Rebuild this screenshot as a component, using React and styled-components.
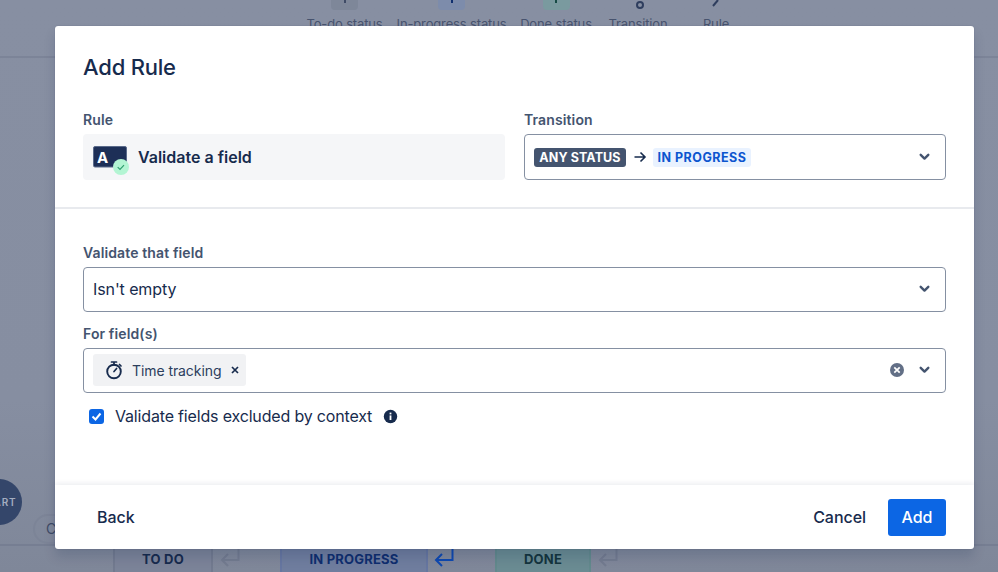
import React from "react";
import styled, { createGlobalStyle } from "styled-components";

const Global = createGlobalStyle`
  html, body { margin: 0; padding: 0; height: 100%; }
  body { font-family: Inter, "Noto Sans", sans-serif; color: #172b4d; overflow: hidden; -webkit-font-smoothing: antialiased; }
  * { box-sizing: border-box; }
`;

const Page = styled.div`
  position: relative;
  width: 998px;
  height: 572px;
  overflow: hidden;
  background: linear-gradient(#878fa2 0%, #868ea1 70%, #7f8799 100%);
  display: flex;
  flex-direction: column;
  justify-content: space-between;
`;

const TopBar = styled.div`
  height: 58px;
  border-bottom: 2px solid #7c8498;
  display: flex;
  justify-content: center;
  padding-left: 37px;
  gap: 14px;
`;

const Tool = styled.div`
  width: ${p => p.$w}px;
  height: 30px;
  margin-top: -2px;
  margin-left: ${p => p.$ml || 0}px;
  display: flex;
  flex-direction: column;
  align-items: center;
  font-size: 13px;
  line-height: 16px;
  letter-spacing: -.15px;
  color: #47536e;
  white-space: nowrap;
`;

const ToolTile = styled.div`
  width: 27px;
  height: 12px;
  border-radius: 0 0 4px 4px;
  background: ${p => p.$bg};
  margin-bottom: 6px;
  flex: none;
  display: flex;
  justify-content: center;
  &::after { content: ""; width: 2px; height: 5px; background: ${p => p.$fg}; }
`;

const ToolGlyph = styled.svg`
  width: 14px;
  height: 12px;
  margin-bottom: 6px;
  flex: none;
`;

const BottomRow = styled.div`
  height: 28px;
  border-top: 2px solid #767e92;
  padding-left: 113px;
  display: flex;
`;

const Status = styled.div`
  width: ${p => p.$w}px;
  margin-left: ${p => p.$ml || 0}px;
  background: ${p => p.$bg};
  border-left: 2px solid ${p => p.$bd};
  border-right: 2px solid ${p => p.$bd};
  color: ${p => p.$fg};
  font-size: 13px;
  font-weight: 700;
  line-height: 26px;
  text-align: center;
  letter-spacing: .2px;
`;

const ReturnIcon = styled.svg`
  width: 20px;
  height: 22px;
  margin-left: ${p => p.$ml}px;
  flex: none;
`;

const StartCircle = styled.div`
  position: absolute;
  left: -24px;
  top: 479px;
  width: 46px;
  height: 46px;
  border-radius: 50%;
  background: #34466a;
  color: #a3adc0;
  font-size: 10px;
  font-weight: 600;
  letter-spacing: .8px;
  line-height: 46px;
  text-align: center;
  padding-left: 12px;
`;

const GhostPill = styled.div`
  position: absolute;
  left: 33px;
  top: 514px;
  width: 60px;
  height: 30px;
  border: 2px solid #7c8497;
  border-radius: 15px;
  padding-left: 11px;
  font-size: 14px;
  line-height: 26px;
  color: #3f4b66;
`;

const Modal = styled.div`
  position: absolute;
  left: 55px;
  top: 26px;
  width: 919px;
  height: 523px;
  background: #fff;
  border-radius: 3px;
  box-shadow: 0 8px 12px rgba(9, 30, 66, .15), 0 0 1px rgba(9, 30, 66, .31);
  display: flex;
  flex-direction: column;
`;

const Title = styled.h1`
  margin: 0;
  padding: 27px 28px 0;
  height: 84px;
  font-size: 22px;
  line-height: 29px;
  font-weight: 500;
  letter-spacing: -.2px;
  color: #172b4d;
`;

const TopGrid = styled.div`
  display: grid;
  grid-template-columns: 422px 422px;
  column-gap: 19px;
  padding: 0 28px;
  height: 99px;
  border-bottom: 2px solid #e8eaee;
`;

const Field = styled.div`
  display: flex;
  flex-direction: column;
`;

const Label = styled.label`
  font-size: 14px;
  line-height: 20px;
  font-weight: 600;
  letter-spacing: .12px;
  color: #44546f;
  height: 24px;
`;

const RuleBox = styled.div`
  height: 46px;
  background: #f5f6f8;
  border-radius: 4px;
  display: flex;
  align-items: center;
  padding-left: 10px;
  gap: 10px;
  font-size: 16px;
  font-weight: 600;
  color: #172b4d;
`;

const Select = styled.div`
  height: ${p => p.$h || 46}px;
  border: 1px solid #8590a2;
  border-radius: 4px;
  background: #fff;
  display: flex;
  align-items: center;
  padding: 0 15px ${p => (p.$h ? 1 : 0)}px 9px;
  font-size: 16px;
  letter-spacing: -.1px;
  color: #172b4d;
`;

const Spacer = styled.div`
  flex: 1;
`;

const Lozenge = styled.span`
  height: 19px;
  width: ${p => p.$w}px;
  flex: none;
  text-align: center;
  border-radius: 3px;
  background: ${p => p.$bg};
  color: ${p => p.$fg};
  font-size: 12.5px;
  font-weight: 700;
  line-height: 19px;
  letter-spacing: ${p => p.$ls}px;
  white-space: nowrap;
`;

const Arrow = styled.svg`
  width: 14px;
  height: 14px;
  margin: 0 6px 0 7px;
  flex: none;
`;

const Chevron = styled.svg`
  width: 11px;
  height: 8px;
  flex: none;
`;

const Middle = styled.div`
  padding: 34px 28px 0;
  flex: 1;
`;

const GapField = styled(Field)`
  margin-top: ${p => p.$mt}px;
`;

const Tag = styled.div`
  height: 32px;
  display: flex;
  align-items: center;
  background: #f1f2f4;
  border-radius: 3px;
  padding: 0 6px 0 11px;
  font-size: 14px;
  letter-spacing: -.08px;
  color: #2c3e5d;
`;

const TagIcon = styled.svg`
  width: 20px;
  height: 20px;
  flex: none;
`;

const TagName = styled.span`
  margin: 0 9px 0 8px;
`;

const ClearIcon = styled.svg`
  width: 16px;
  height: 16px;
  margin-right: 14px;
  flex: none;
`;

const CheckRow = styled.div`
  display: flex;
  align-items: center;
  padding-left: 6px;
  margin-top: 14px;
  height: 18px;
  font-size: 16px;
  letter-spacing: -.17px;
  color: #172b4d;
`;

const Box = styled.span`
  width: 15px;
  height: 15px;
  border-radius: 3px;
  background: #0c66e4;
  display: flex;
  align-items: center;
  justify-content: center;
  margin-right: 11px;
`;

const InfoIcon = styled.svg`
  width: 15px;
  height: 15px;
  margin-left: 11px;
`;

const Footer = styled.div`
  height: 64px;
  flex: none;
  display: flex;
  align-items: center;
  padding: 0 28px 0 42px;
  box-shadow: 0 -2px 5px rgba(9, 30, 66, .07);
  border-radius: 0 0 3px 3px;
  font-size: 16px;
  font-weight: 500;
  letter-spacing: -.05px;
  color: #172b4d;
`;

const TextButton = styled.span`
  margin-right: 22px;
`;

const PrimaryButton = styled.div`
  width: 58px;
  height: 37px;
  border-radius: 3px;
  background: #0c66e4;
  color: #fff;
  text-align: center;
  line-height: 37px;
`;

const RuleGlyph = styled.svg`
  width: 36px;
  height: 30px;
  flex: none;
  margin: 8px -1px 0 0;
`;

const ChevronDown = () => (
  <Chevron viewBox="0 0 11 8"><path d="M1.7 1.8l3.8 3.8 3.8-3.8" fill="none" stroke="#44546f" strokeWidth="2.4" strokeLinecap="round" strokeLinejoin="round" /></Chevron>
);

const RuleIcon = () => (
  <RuleGlyph viewBox="0 0 36 30">
    <rect x="0.5" y="0.5" width="33" height="20.5" rx="1.5" fill="#1d2f57" stroke="#5a6a8a" />
    <text x="4" y="17" fontFamily="Inter, sans-serif" fontWeight="700" fontSize="15" fill="#fff">A</text>
    <circle cx="28" cy="21" r="8" fill="#b3f5d3" />
    <path d="M24.7 21.1l2.3 2.3 4-4.2" fill="none" stroke="#2e9e6e" strokeWidth="1.2" />
  </RuleGlyph>
);

const Ret = ({ color, ml }) => (
  <ReturnIcon $ml={ml} viewBox="0 0 20 22"><path d="M18.5 0v14H2M8 8l-6 6 6 6" fill="none" stroke={color} strokeWidth="2" /></ReturnIcon>
);

export default function App() {
  return (
    <Page>
      <Global />
      <TopBar>
        <Tool $w={76}><ToolTile $bg="#7e8799" $fg="#3f4b66" />To-do status</Tool>
        <Tool $w={110}><ToolTile $bg="#7d8cab" $fg="#0f2e6e" />In-progress status</Tool>
        <Tool $w={71}><ToolTile $bg="#7a9a9f" $fg="#164b45" />Done status</Tool>
        <Tool $w={59} $ml={3}>
          <ToolGlyph viewBox="0 0 14 12"><circle cx="9" cy="7" r="3" fill="none" stroke="#2f3e5e" strokeWidth="2" /></ToolGlyph>
          Transition
        </Tool>
        <Tool $w={25} $ml={22}>
          <ToolGlyph viewBox="0 0 14 12"><path d="M9 2L4 8" fill="none" stroke="#2f3e5e" strokeWidth="2" /></ToolGlyph>
          Rule
        </Tool>
      </TopBar>
      <BottomRow>
        <Status $w={100} $bg="#7b8398" $bd="#727a8f" $fg="#172b4d">TO DO</Status>
        <Ret color="#737b8f" ml={7} />
        <Status $w={148} $ml={40} $bg="#6f7d9e" $bd="#6676a0" $fg="#0f2e6e">IN PROGRESS</Status>
        <Ret color="#0f49b0" ml={6} />
        <Status $w={96} $ml={41} $bg="#6a8b92" $bd="#62898c" $fg="#14353d">DONE</Status>
        <Ret color="#737b8f" ml={7} />
      </BottomRow>
      <StartCircle>ART</StartCircle>
      <GhostPill>C</GhostPill>
      <Modal>
        <Title>Add Rule</Title>
        <TopGrid>
          <Field>
            <Label>Rule</Label>
            <RuleBox><RuleIcon />Validate a field</RuleBox>
          </Field>
          <Field>
            <Label>Transition</Label>
            <Select>
              <Lozenge $w={92} $ls={0.1} $bg="#44546f" $fg="#fff">ANY STATUS</Lozenge>
              <Arrow viewBox="0 0 14 14"><path d="M1.5 7h10.5M7.5 2.5L12 7l-4.5 4.5" fill="none" stroke="#172b4d" strokeWidth="1.6" /></Arrow>
              <Lozenge $w={98} $ls={0.5} $bg="#e9f2ff" $fg="#0c55cf">IN PROGRESS</Lozenge>
              <Spacer />
              <ChevronDown />
            </Select>
          </Field>
        </TopGrid>
        <Middle>
          <Field>
            <Label>Validate that field</Label>
            <Select $h={45}>Isn't empty<Spacer /><ChevronDown /></Select>
          </Field>
          <GapField $mt={12}>
            <Label>For field(s)</Label>
            <Select $h={45}>
              <Tag>
                <TagIcon viewBox="0 0 20 20">
                  <circle cx="10" cy="11.5" r="6.8" fill="none" stroke="#172b4d" strokeWidth="1.9" />
                  <path d="M7.5 2h5M10 2v3M10 11.5l2.6-3M15.5 4.5l1.5 1.5" fill="none" stroke="#172b4d" strokeWidth="1.7" strokeLinecap="round" />
                </TagIcon>
                <TagName>Time tracking</TagName>
                <svg width="10" height="10" viewBox="0 0 10 10"><path d="M2 2l6 6M8 2l-6 6" stroke="#172b4d" strokeWidth="1.7" /></svg>
              </Tag>
              <Spacer />
              <ClearIcon viewBox="0 0 16 16"><circle cx="8" cy="8" r="7" fill="#626f86" /><path d="M5.3 5.3l5.4 5.4M10.7 5.3l-5.4 5.4" stroke="#fff" strokeWidth="1.7" /></ClearIcon>
              <ChevronDown />
            </Select>
          </GapField>
          <CheckRow>
            <Box><svg width="11" height="9" viewBox="0 0 11 9"><path d="M1.5 4.5l3 3 5-6" fill="none" stroke="#fff" strokeWidth="2" /></svg></Box>
            Validate fields excluded by context
            <InfoIcon viewBox="0 0 15 15"><circle cx="7.5" cy="7.5" r="6.7" fill="#172b4d" /><rect x="6.6" y="6.4" width="1.8" height="4.6" fill="#fff" /><rect x="6.6" y="3.6" width="1.8" height="1.8" fill="#fff" /></InfoIcon>
          </CheckRow>
        </Middle>
        <Footer>
          <span>Back</span>
          <Spacer />
          <TextButton>Cancel</TextButton>
          <PrimaryButton>Add</PrimaryButton>
        </Footer>
      </Modal>
    </Page>
  );
}
